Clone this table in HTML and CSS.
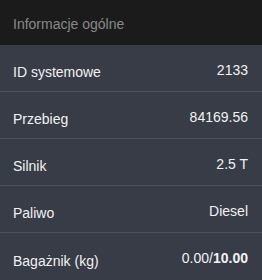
FILE: index.html
```html
<!DOCTYPE html>
<html lang="pl">
<head>
    <meta charset="UTF-8">
    <title>Informacje ogólne</title>
    <link rel="stylesheet" href="styles.css">
</head>
<body>
    <!-- nagłówek -->
    <div id="header">Informacje ogólne</div>

    <!-- lista -->
    <div id="info-list">
        <div class="info-row">
            <span class="info-label">ID systemowe</span>
            <span class="info-value">2133</span>
        </div>
        <div class="info-row">
            <span class="info-label">Przebieg</span>
            <span class="info-value">84169.56</span>
        </div>
        <div class="info-row">
            <span class="info-label">Silnik</span>
            <span class="info-value">2.5 T</span>
        </div>
        <div class="info-row">
            <span class="info-label">Paliwo</span>
            <span class="info-value">Diesel</span>
        </div>
        <div class="info-row">
            <span class="info-label">Bagażnik (kg)</span>
            <span class="info-value">0.00/<b>10.00</b></span>
        </div>
    </div>
</body>
</html>
```

FILE: styles.css
```css
body {
    font-family: "Liberation Sans", Arial, sans-serif;
    font-size: 14px;
    margin: 0;
    padding: 0;
    background: #373c47;
}

#header {
    height: 45px;
    padding: 2px 13px 0;
    box-sizing: border-box;
    display: flex;
    align-items: center;
    background: #1b1b1b;
    color: #898989;
}

.info-row {
    height: 47px;
    box-sizing: border-box;
    padding: 0 14px 0 13px;
    display: flex;
    align-items: center;
    justify-content: space-between;
    line-height: 16px;
    color: #f2f2f2;
    border-bottom: 1px solid #4b505b;
}

.info-row:last-child {
    border-bottom: none;
}

.info-label {
    padding-top: 8px;
}

.info-value {
    padding-top: 3px;
}
```
